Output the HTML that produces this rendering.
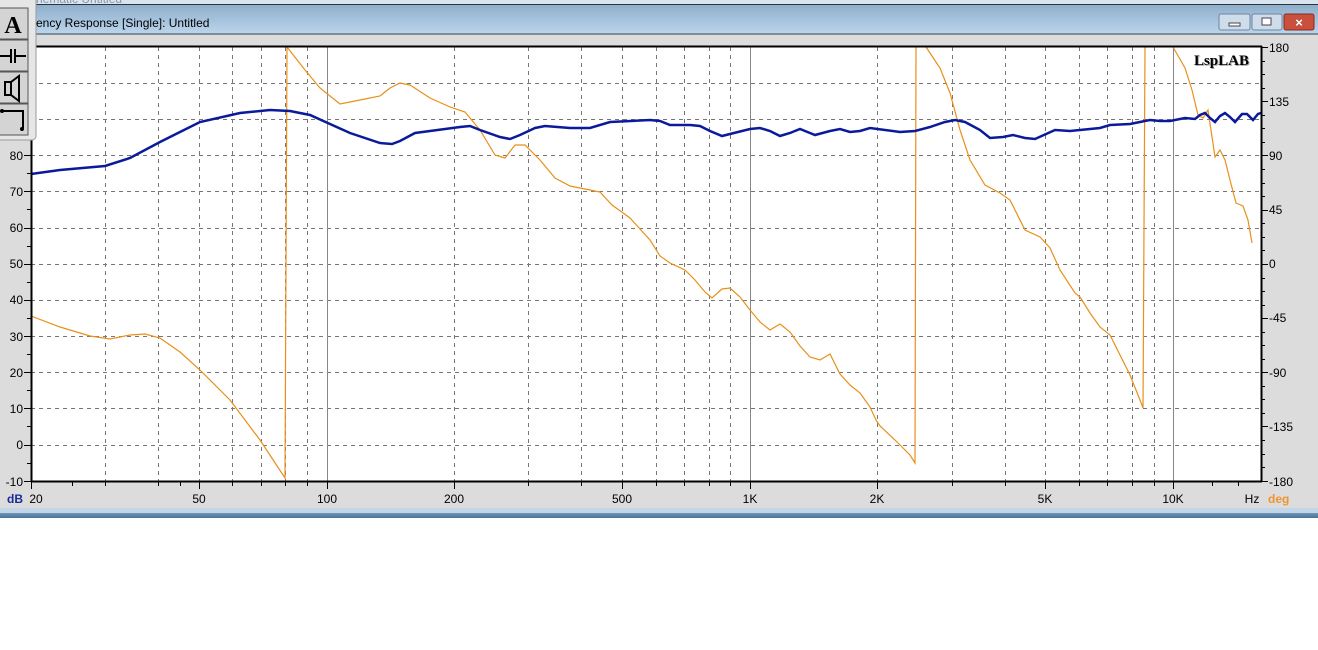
<!DOCTYPE html><html><head><meta charset="utf-8"><style>
body{margin:0;width:1318px;height:650px;background:#fff;overflow:hidden;position:relative;font-family:"Liberation Sans",sans-serif}
</style></head><body>
<svg width="1318" height="650" style="position:absolute;left:0;top:0" font-family="Liberation Sans, sans-serif">
<rect x="0" y="0" width="1318" height="5" fill="#d8e4ef"/>
<text x="36" y="3" font-size="12" fill="#8899aa">hematic Untitled</text>
<rect x="0" y="4" width="1318" height="1" fill="#333"/>
<defs><linearGradient id="tb" x1="0" y1="0" x2="0" y2="1"><stop offset="0" stop-color="#8eafcc"/><stop offset="1" stop-color="#bcd5ec"/></linearGradient>
<linearGradient id="bb" x1="0" y1="0" x2="0" y2="1"><stop offset="0" stop-color="#6f94b5"/><stop offset="1" stop-color="#4a7399"/></linearGradient></defs>
<rect x="0" y="5" width="1318" height="29" fill="url(#tb)"/>
<rect x="0" y="33" width="1318" height="2" fill="#7f8c99"/>
<text x="36" y="27" font-size="12" fill="#000">ency Response [Single]: Untitled</text>
<!-- window buttons -->
<rect x="1219" y="14" width="31" height="16" rx="2" fill="#cfdcea" stroke="#6d87a3"/>
<rect x="1229" y="23" width="11" height="3" fill="#fff" stroke="#445"/>
<rect x="1252" y="14" width="30" height="16" rx="2" fill="#cfdcea" stroke="#6d87a3"/>
<rect x="1262" y="18" width="9" height="7" fill="#fff" stroke="#445"/>
<rect x="1284" y="14" width="30" height="16" rx="2" fill="#c8503c" stroke="#8a2a1e"/>
<text x="1299" y="27" font-size="13" font-weight="bold" fill="#fff" text-anchor="middle">×</text>
<rect x="0" y="35" width="1318" height="473" fill="#dcdcdc"/>
<rect x="0" y="508" width="1318" height="5" fill="#c2d6ea"/>
<rect x="0" y="513" width="1318" height="5" fill="url(#bb)"/>
<!-- plot -->
<rect x="31" y="47" width="1230" height="434" fill="#fff"/>
<g stroke="#777" stroke-width="1" stroke-dasharray="4,4">
<path d="M31 83.5H1261M31 119.5H1261M31 155.5H1261M31 191.5H1261M31 228.5H1261M31 264.5H1261M31 300.5H1261M31 336.5H1261M31 372.5H1261M31 408.5H1261M31 445.5H1261"/>
<path d="M105.5 47V481M158.5 47V481M199.5 47V481M232.5 47V481M261.5 47V481M285.5 47V481M307.5 47V481M454.5 47V481M528.5 47V481M581.5 47V481M622.5 47V481M656.5 47V481M684.5 47V481M709.5 47V481M730.5 47V481M877.5 47V481M952.5 47V481M1005.5 47V481M1045.5 47V481M1079.5 47V481M1107.5 47V481M1132.5 47V481M1154.5 47V481"/>
</g>
<path d="M327.5 47V481M750.5 47V481M1173.5 47V481" stroke="#888" stroke-width="1"/>
<polyline fill="none" stroke="#e8901a" stroke-width="1.2" points="31,316 60,327 90,336 110,339 130,335 145,334 160,338 180,352 200,370 230,400 260,440 285,478 287,47 305,70 320,88 340,104 360,100 380,96 390,88 400,83 410,85 430,98 450,107 465,112 480,130 495,155 505,158 515,145 525,145 540,160 555,178 570,186 590,190 600,192 612,205 630,218 650,240 660,256 670,263 685,270 695,280 705,292 712,298 722,289 730,288 740,297 750,310 760,322 770,330 780,324 790,332 800,346 810,357 820,360 830,354 840,374 850,385 860,393 870,407 876,420 880,426 895,440 910,455 915,463 916,47"/>
<polyline fill="none" stroke="#e8901a" stroke-width="1.2" points="926,47 940,68 950,93 960,130 970,160 985,185 1000,193 1010,200 1025,230 1040,237 1050,248 1060,270 1075,293 1080,297 1090,313 1100,327 1110,335 1120,355 1130,375 1140,400 1143,408 1145,47"/>
<polyline fill="none" stroke="#e8901a" stroke-width="1.2" points="1173,47 1185,68 1192,90 1198,115 1203,118 1208,110 1215,157 1220,150 1225,160 1230,180 1236,203 1243,206 1248,220 1252,243"/>
<polyline fill="none" stroke="#0a1a9a" stroke-width="2.5" points="31,174 60,170 105,166 130,158 160,142 200,122 240,113 270,110 290,111 310,115 330,124 350,133 380,143 392,144 400,141 415,133 430,131 460,127 470,126 480,130 500,137 510,139 520,135 535,128 545,126 570,128 590,128 610,122 650,120 660,121 670,125 690,125 700,126 710,131 722,136 730,134 750,129 760,128 770,131 780,136 790,133 800,129 810,133 815,135 830,131 840,129 850,132 860,131 870,128 885,130 900,132 915,131 930,127 945,122 955,120 965,122 980,130 990,138 1003,137 1013,135 1025,138 1035,139 1055,130 1070,131 1090,129 1100,128 1110,125 1130,124 1150,120 1160,121 1170,121 1185,118 1195,119 1200,115 1205,113 1210,118 1215,122 1220,116 1225,113 1230,117 1235,122 1242,114 1247,114 1253,120 1258,114 1261,113"/>
<text x="1250" y="66" font-family="Liberation Serif, serif" font-size="15" font-weight="bold" fill="#aaa" text-anchor="end">LspLAB</text>
<text x="1249" y="65" font-family="Liberation Serif, serif" font-size="15" font-weight="bold" fill="#000" text-anchor="end">LspLAB</text>
<!-- axes -->
<path d="M31 46.5H1262M31 481.5H1262M31.5 47V482M1261.5 46V482" stroke="#000" stroke-width="2" fill="none"/>
<g stroke="#000" stroke-width="1">
<path d="M24 155.5H31M24 191.5H31M24 228.5H31M24 264.5H31M24 300.5H31M24 336.5H31M24 372.5H31M24 408.5H31M24 445.5H31M24 481.5H31"/>
<path d="M27 137.5H31M27 173.5H31M27 209.5H31M27 246.5H31M27 282.5H31M27 318.5H31M27 354.5H31M27 390.5H31M27 426.5H31M27 463.5H31"/>
<path d="M1261 47.5H1268M1261 101.5H1268M1261 155.5H1268M1261 210.5H1268M1261 264.5H1268M1261 318.5H1268M1261 372.5H1268M1261 426.5H1268M1261 481.5H1268"/>
<path d="M1261 61.5H1265M1261 74.5H1265M1261 88.5H1265M1261 115.5H1265M1261 128.5H1265M1261 142.5H1265M1261 169.5H1265M1261 183.5H1265M1261 196.5H1265M1261 223.5H1265M1261 237.5H1265M1261 250.5H1265M1261 278.5H1265M1261 291.5H1265M1261 305.5H1265M1261 332.5H1265M1261 345.5H1265M1261 359.5H1265M1261 386.5H1265M1261 399.5H1265M1261 413.5H1265M1261 440.5H1265M1261 454.5H1265M1261 467.5H1265"/>
<path d="M31.5 481V489M199.5 481V489M327.5 481V489M454.5 481V489M622.5 481V489M750.5 481V489M877.5 481V489M1045.5 481V489M1173.5 481V489"/>
<path d="M72.5 481V486M105.5 481V486M158.5 481V486M180.5 481V486M232.5 481V486M261.5 481V486M285.5 481V486M307.5 481V486M528.5 481V486M581.5 481V486M656.5 481V486M684.5 481V486M709.5 481V486M730.5 481V486M952.5 481V486M1005.5 481V486M1079.5 481V486M1107.5 481V486M1132.5 481V486M1154.5 481V486M1212.5 481V486M1238.5 481V486"/>
</g>
<g font-size="12" fill="#000" text-anchor="end">
<text x="23" y="160">80</text><text x="23" y="196">70</text><text x="23" y="232">60</text><text x="23" y="268">50</text><text x="23" y="304">40</text><text x="23" y="341">30</text><text x="23" y="377">20</text><text x="23" y="413">10</text><text x="23" y="449">0</text><text x="23" y="486">-10</text>
</g>
<g font-size="12" fill="#000">
<text x="1269" y="52">180</text><text x="1269" y="106">135</text><text x="1269" y="160">90</text><text x="1269" y="214">45</text><text x="1269" y="268">0</text><text x="1269" y="322">-45</text><text x="1269" y="377">-90</text><text x="1269" y="431">-135</text><text x="1269" y="486">-180</text>
</g>
<g font-size="12" fill="#000" text-anchor="middle">
<text x="36" y="503">20</text><text x="199" y="503">50</text><text x="327" y="503">100</text><text x="454" y="503">200</text><text x="622" y="503">500</text><text x="750" y="503">1K</text><text x="877" y="503">2K</text><text x="1045" y="503">5K</text><text x="1173" y="503">10K</text><text x="1252" y="503">Hz</text>
</g>
<text x="7" y="503" font-size="12" font-weight="bold" fill="#1a2a9a">dB</text>
<text x="1268" y="503" font-size="12" font-weight="bold" fill="#f0952a">deg</text>
<!-- toolbar -->
<rect x="-4" y="-4" width="40" height="144" rx="4" fill="#e6e6e6" stroke="#9a9a9a"/>
<g fill="#d4d4d4" stroke="#555">
<rect x="-1" y="8" width="29" height="31"/><rect x="-1" y="40" width="29" height="31"/><rect x="-1" y="72" width="29" height="31"/><rect x="-1" y="104" width="29" height="31"/>
</g>
<text x="13" y="33" font-family="Liberation Serif, serif" font-size="24" font-weight="bold" text-anchor="middle" fill="#000">A</text>
<path d="M0 56H11M11 49V63M15 49V63M15 56H26" stroke="#000" stroke-width="2" fill="none"/>
<path d="M5 82H11V95H5ZM11 82L19 76V101L11 95" stroke="#000" stroke-width="2" fill="none"/>
<path d="M2 111H23V128" stroke="#000" stroke-width="2" fill="none"/>
<circle cx="2" cy="111" r="2" fill="#000"/><circle cx="22" cy="129" r="2" fill="#000"/>
</svg>
</body></html>
